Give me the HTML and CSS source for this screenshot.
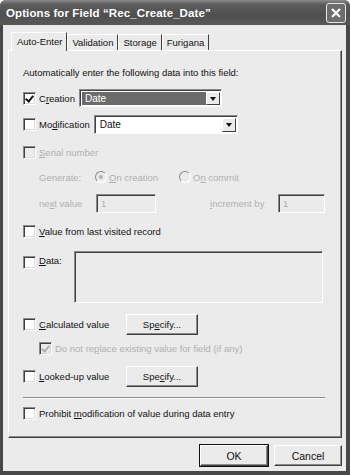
FILE: index.html
```html
<!DOCTYPE html>
<html lang="en">
<head>
    <meta charset="UTF-8">
    <title>Options for Field</title>
    <link rel="stylesheet" href="styles.css">
</head>
<body>
    <div class="window">
        <div class="titlebar">
            <span class="title">Options for Field “Rec_Create_Date”</span>
            <span class="close-btn">
                <svg width="12" height="12" viewBox="0 0 12 12"><path d="M2 2 L10 10 M10 2 L2 10" stroke="#fff" stroke-width="2.2" fill="none"/></svg>
            </span>
        </div>

        <div class="client">
            <div class="tabs">
                <div class="tab active">Auto-Enter</div>
                <div class="tab">Validation</div>
                <div class="tab">Storage</div>
                <div class="tab">Furigana</div>
            </div>

            <div class="panel">
                <div class="row intro">Automatically enter the following data into this field:</div>

                <div class="row r-creation">
                    <span class="check checked"></span>
                    <span class="label">C<u>r</u>eation</span>
                    <span class="select select-dark">
                        <span class="select-text">Date</span>
                        <span class="select-arrow"></span>
                    </span>
                </div>

                <div class="row r-mod">
                    <span class="check"></span>
                    <span class="label">Mo<u>d</u>ification</span>
                    <span class="select select-mod">
                        <span class="select-text">Date</span>
                        <span class="select-arrow"></span>
                    </span>
                </div>

                <div class="row r-serial disabled">
                    <span class="check off"></span>
                    <span class="label"><u>S</u>erial number</span>
                </div>

                <div class="row r-generate disabled indent">
                    <span class="gen-label">Generate:</span>
                    <span class="radio on"></span>
                    <span class="radio-label"><u>O</u>n creation</span>
                    <span class="radio"></span>
                    <span class="radio-label">O<u>n</u> commit</span>
                </div>

                <div class="row r-next disabled indent">
                    <span class="next-label">ne<u>x</u>t value</span>
                    <span class="input input-next">1</span>
                    <span class="inc-label"><u>i</u>ncrement by</span>
                    <span class="input input-inc">1</span>
                </div>

                <div class="row r-last">
                    <span class="check"></span>
                    <span class="label"><u>V</u>alue from last visited record</span>
                </div>

                <div class="row r-data">
                    <span class="check"></span>
                    <span class="label data-label"><u>D</u>ata:</span>
                    <span class="textarea"></span>
                </div>

                <div class="row r-calc">
                    <span class="check"></span>
                    <span class="label btn-label"><u>C</u>alculated value</span>
                    <span class="button specify">Sp<u>e</u>cify...</span>
                </div>

                <div class="row r-replace disabled indent">
                    <span class="check checked off"></span>
                    <span class="label">Do not re<u>p</u>lace existing value for field (if any)</span>
                </div>

                <div class="row r-lookup">
                    <span class="check"></span>
                    <span class="label btn-label"><u>L</u>ooked-up value</span>
                    <span class="button specify">Spe<u>c</u>ify...</span>
                </div>

                <div class="separator"></div>

                <div class="row r-prohibit">
                    <span class="check"></span>
                    <span class="label">Prohibit <u>m</u>odification of value during data entry</span>
                </div>
            </div>

            <div class="buttons">
                <span class="button default">OK</span>
                <span class="button">Cancel</span>
            </div>
        </div>
    </div>
</body>
</html>
```

FILE: styles.css
```css
:root {
    --face: #ebebeb;
    --shadow: #8a8a8a;
    --dark: #404040;
    --light: #ffffff;
    --disabled: #b0b0b0;
}

* {
    box-sizing: border-box;
}

body {
    margin: 0;
    width: 350px;
    height: 475px;
    font-family: "Liberation Sans", Arial, sans-serif;
    font-size: 9.5px;
    color: #111;
    background: #fff;
}

u {
    text-decoration: underline;
    text-underline-offset: 1px;
}

.window {
    width: 350px;
    height: 475px;
    background: #484848;
    display: flex;
    flex-direction: column;
    padding: 0 4px 4px 3px;
    border-radius: 6px 6px 0 0;
}

.titlebar {
    height: 25px;
    display: flex;
    align-items: center;
    justify-content: space-between;
    padding: 0 4px 0 3px;
    background: linear-gradient(to bottom, #8a8a8a 0%, #5c5c5c 18%, #4f4f4f 60%, #585858 100%);
    margin: 0 -4px 0 -3px;
    border-radius: 6px 6px 0 0;
}

.title {
    color: #fff;
    font-weight: bold;
    font-size: 11.5px;
    letter-spacing: 0.1px;
    padding-left: 3px;
}

.close-btn {
    width: 20px;
    height: 20px;
    border: 1px solid #e8e8e8;
    border-radius: 3px;
    background: #6c6c6c;
    display: flex;
    align-items: center;
    justify-content: center;
}

.client {
    flex: 1;
    background: var(--face);
    padding: 7px 4px 0 5px;
    display: flex;
    flex-direction: column;
}

/* pestañas */
.tabs {
    display: flex;
    height: 18px;
    padding-left: 3px;
    align-items: flex-end;
}

.tab {
    height: 16px;
    padding: 0 4px 0 4px;
    display: flex;
    align-items: center;
    border-top: 1px solid var(--light);
    border-left: 1px solid var(--light);
    border-right: 1px solid var(--dark);
}

.tab.active {
    height: 19px;
    padding: 0 4px 2px 5px;
    margin-bottom: -1px;
    background: var(--face);
    position: relative;
    z-index: 1;
}

.panel {
    height: 388px;
    border-top: 1px solid var(--light);
    border-left: 1px solid var(--light);
    border-right: 1px solid var(--dark);
    border-bottom: 1px solid var(--dark);
    box-shadow: inset -1px -1px 0 var(--shadow);
    padding: 11px 0 0 14px;
}

.row {
    height: 20px;
    display: flex;
    align-items: center;
}

.r-creation { margin-top: 6px; }
.r-mod { margin-top: 6px; }
.r-serial { margin-top: 8px; }
.r-generate { margin-top: 5px; }
.r-next { margin-top: 6px; }
.r-last { margin-top: 8px; }
.r-data {
    margin-top: 10px;
    height: 52px;
    align-items: flex-start;
}
.r-data .check { margin-top: 5px; }
.r-data .label { margin-top: 4px; }
.r-calc { margin-top: 11px; height: 21px; }
.r-replace { margin-top: 3px; }
.r-lookup { margin-top: 8px; height: 21px; }
.r-prohibit { margin-top: 4px; }

.indent {
    padding-left: 16px;
}

.disabled {
    color: var(--disabled);
}

.label {
    margin-left: 3px;
}

/* casillas */
.check {
    width: 13px;
    height: 13px;
    flex: none;
    background: #fff;
    border-top: 1px solid var(--shadow);
    border-left: 1px solid var(--shadow);
    border-right: 1px solid var(--light);
    border-bottom: 1px solid var(--light);
    box-shadow: inset 1px 1px 0 var(--dark), inset -1px -1px 0 #dcdcdc;
    position: relative;
}

.check.off {
    background: var(--face);
}

.check.checked::after {
    content: "";
    position: absolute;
    left: 3px;
    top: 1px;
    width: 3px;
    height: 6px;
    border-right: 2px solid #111;
    border-bottom: 2px solid #111;
    transform: rotate(40deg);
}

.check.checked.off::after {
    border-color: var(--disabled);
}

.radio {
    width: 12px;
    height: 12px;
    flex: none;
    border-radius: 50%;
    border: 1px solid var(--shadow);
    border-right-color: var(--light);
    border-bottom-color: var(--light);
    background: var(--face);
    position: relative;
}

.radio.on::after {
    content: "";
    position: absolute;
    left: 3px;
    top: 3px;
    width: 4px;
    height: 4px;
    border-radius: 50%;
    background: var(--disabled);
}

.radio-label {
    margin-left: 2px;
    width: 70px;
}

.gen-label {
    width: 56px;
}

/* desplegables */
.select {
    height: 18px;
    display: flex;
    align-items: center;
    margin-left: 4px;
    border-top: 1px solid var(--shadow);
    border-left: 1px solid var(--shadow);
    border-right: 1px solid var(--light);
    border-bottom: 1px solid var(--light);
    box-shadow: inset 1px 1px 0 var(--dark);
    background: #fff;
    padding: 2px 1px 1px 2px;
}

.select-dark {
    width: 143px;
}

.select-dark .select-text {
    background: #6b6b6b;
    color: #fff;
}

.select-mod {
    width: 144px;
    height: 19px;
    margin-left: 4px;
}

.select-text {
    flex: 1;
    height: 100%;
    display: flex;
    align-items: center;
    padding-left: 3px;
    font-size: 10px;
}

.select-arrow {
    width: 14px;
    height: 100%;
    flex: none;
    background: var(--face);
    border-top: 1px solid var(--light);
    border-left: 1px solid var(--light);
    border-right: 1px solid var(--dark);
    border-bottom: 1px solid var(--dark);
    display: flex;
    align-items: center;
    justify-content: center;
}

.select-arrow::after {
    content: "";
    border-left: 3.5px solid transparent;
    border-right: 3.5px solid transparent;
    border-top: 4px solid #111;
}

/* campos */
.input {
    height: 19px;
    display: flex;
    align-items: center;
    padding-left: 4px;
    background: var(--face);
    border-top: 1px solid var(--shadow);
    border-left: 1px solid var(--shadow);
    border-right: 1px solid var(--light);
    border-bottom: 1px solid var(--light);
    box-shadow: inset 1px 1px 0 var(--dark);
}

.next-label {
    width: 57px;
}

.input-next {
    width: 60px;
}

.inc-label {
    margin-left: 54px;
    width: 68px;
}

.input-inc {
    width: 47px;
}

.data-label {
    width: 33px;
}

.textarea {
    width: 249px;
    height: 52px;
    margin-left: 2px;
    background: var(--face);
    border-top: 1px solid var(--shadow);
    border-left: 1px solid var(--shadow);
    border-right: 1px solid var(--light);
    border-bottom: 1px solid var(--light);
    box-shadow: inset 1px 1px 0 var(--dark);
}

.btn-label {
    width: 87px;
}

/* botones */
.button {
    height: 21px;
    display: flex;
    align-items: center;
    justify-content: center;
    background: var(--face);
    border-top: 1px solid var(--light);
    border-left: 1px solid var(--light);
    border-right: 1px solid var(--dark);
    border-bottom: 1px solid var(--dark);
    box-shadow: inset -1px -1px 0 var(--shadow);
}

.specify {
    width: 72px;
}

.separator {
    margin-top: 10px;
    width: 302px;
    height: 2px;
    border-top: 1px solid var(--shadow);
    border-bottom: 1px solid var(--light);
}

.buttons {
    display: flex;
    justify-content: flex-end;
    gap: 6px;
    margin-top: 7px;
}

.buttons .button {
    width: 68px;
    font-size: 10.5px;
}

.button.default {
    outline: 1px solid #111;
}
```
